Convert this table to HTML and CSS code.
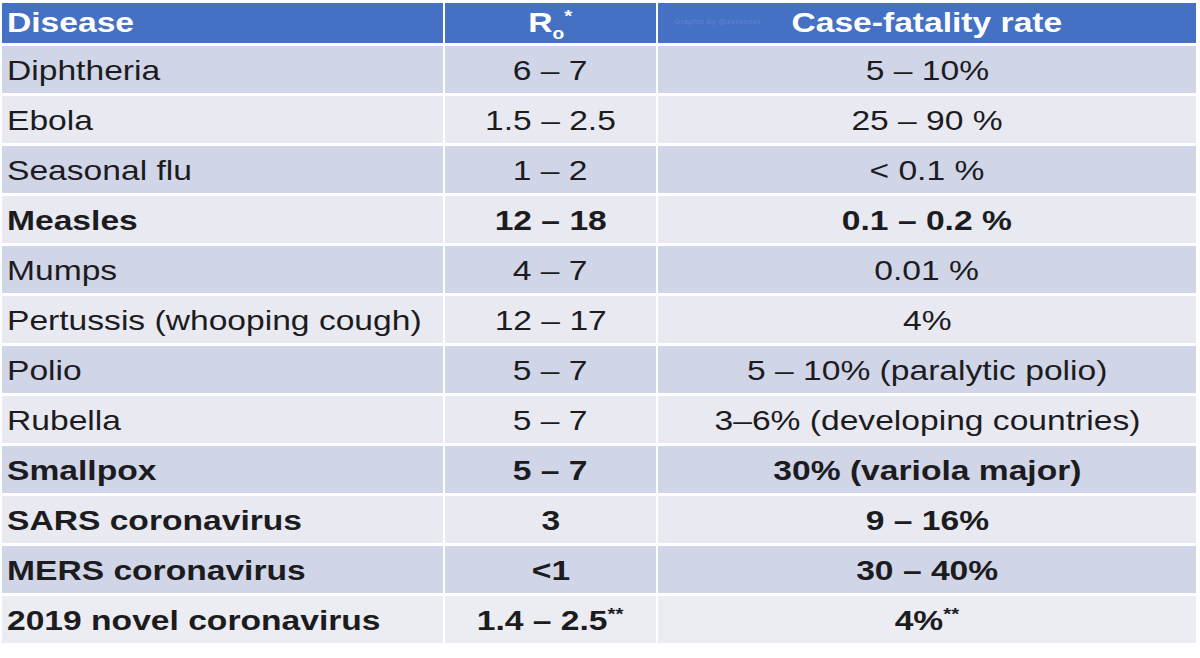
FILE: index.html
```html
<!DOCTYPE html>
<html>
<head>
<meta charset="utf-8">
<link rel="stylesheet" href="styles.css">
</head>
<body>
<div class="table">
  <div class="row head">
    <div class="cell c1"><span class="t">Disease</span></div>
    <div class="cell c2"><span class="t">R<sub>o</sub><sup>*</sup></span></div>
    <div class="cell c3"><span class="mark">Graphic by @xxxxxxxx</span><span class="t">Case-fatality rate</span></div>
  </div>
  <div class="row b1">
    <div class="cell c1"><span class="t">Diphtheria</span></div>
    <div class="cell c2"><span class="t">6 – 7</span></div>
    <div class="cell c3"><span class="t">5 – 10%</span></div>
  </div>
  <div class="row b2">
    <div class="cell c1"><span class="t">Ebola</span></div>
    <div class="cell c2"><span class="t">1.5 – 2.5</span></div>
    <div class="cell c3"><span class="t">25 – 90 %</span></div>
  </div>
  <div class="row b1">
    <div class="cell c1"><span class="t">Seasonal flu</span></div>
    <div class="cell c2"><span class="t">1 – 2</span></div>
    <div class="cell c3"><span class="t">&lt; 0.1 %</span></div>
  </div>
  <div class="row b2 bold">
    <div class="cell c1"><span class="t">Measles</span></div>
    <div class="cell c2"><span class="t">12 – 18</span></div>
    <div class="cell c3"><span class="t">0.1 – 0.2 %</span></div>
  </div>
  <div class="row b1">
    <div class="cell c1"><span class="t">Mumps</span></div>
    <div class="cell c2"><span class="t">4 – 7</span></div>
    <div class="cell c3"><span class="t">0.01 %</span></div>
  </div>
  <div class="row b2">
    <div class="cell c1"><span class="t">Pertussis (whooping cough)</span></div>
    <div class="cell c2"><span class="t">12 – 17</span></div>
    <div class="cell c3"><span class="t">4%</span></div>
  </div>
  <div class="row b1">
    <div class="cell c1"><span class="t">Polio</span></div>
    <div class="cell c2"><span class="t">5 – 7</span></div>
    <div class="cell c3"><span class="t">5 – 10% (paralytic polio)</span></div>
  </div>
  <div class="row b2">
    <div class="cell c1"><span class="t">Rubella</span></div>
    <div class="cell c2"><span class="t">5 – 7</span></div>
    <div class="cell c3"><span class="t">3–6% (developing countries)</span></div>
  </div>
  <div class="row b1 bold">
    <div class="cell c1"><span class="t">Smallpox</span></div>
    <div class="cell c2"><span class="t">5 – 7</span></div>
    <div class="cell c3"><span class="t">30% (variola major)</span></div>
  </div>
  <div class="row b2 bold">
    <div class="cell c1"><span class="t">SARS coronavirus</span></div>
    <div class="cell c2"><span class="t">3</span></div>
    <div class="cell c3"><span class="t">9 – 16%</span></div>
  </div>
  <div class="row b1 bold">
    <div class="cell c1"><span class="t">MERS coronavirus</span></div>
    <div class="cell c2"><span class="t">&lt;1</span></div>
    <div class="cell c3"><span class="t">30 – 40%</span></div>
  </div>
  <div class="row b2 bold last">
    <div class="cell c1"><span class="t">2019 novel coronavirus</span></div>
    <div class="cell c2"><span class="t">1.4 – 2.5<sup>**</sup></span></div>
    <div class="cell c3"><span class="t">4%<sup>**</sup></span></div>
  </div>
</div>
</body>
</html>
```
FILE: styles.css
```css
html, body {
  margin: 0;
  padding: 0;
  background: #ffffff;
}
body {
  width: 1200px;
  height: 658px;
  overflow: hidden;
  font-family: "Liberation Sans", Arial, sans-serif;
  color: #1c1c1e;
}
.table {
  display: flex;
  flex-direction: column;
  gap: 3px;
  padding: 3px 5px 0 2px;
}
.row {
  display: grid;
  grid-template-columns: 441px 211px 538px;
  column-gap: 2px;
  height: 47px;
}
.row.head {
  height: 40px;
}
.cell {
  display: flex;
  align-items: center;
  justify-content: center;
  position: relative;
  font-size: 28px;
  line-height: 32px;
  padding-top: 2px;
}
.cell.c1 {
  justify-content: flex-start;
  padding-left: 5px;
}
.head .cell {
  background: #4571c4;
  color: #ffffff;
  font-weight: bold;
  padding-top: 0;
}
.b1 .cell {
  background: #d1d5e8;
}
.b2 .cell {
  background: #e9e9f2;
}
.last .cell {
  background: #ececf3;
}
.bold .cell {
  font-weight: bold;
}
.t {
  display: inline-block;
  transform: scaleX(1.2);
  transform-origin: center;
  white-space: nowrap;
}
.c1 .t {
  transform-origin: left center;
}
sub {
  font-size: 16px;
  vertical-align: -7px;
  line-height: 0;
}
sup {
  font-size: 17px;
  vertical-align: 10px;
  line-height: 0;
}
.mark {
  position: absolute;
  left: 16px;
  top: 14px;
  font-size: 8px;
  line-height: 10px;
  font-weight: normal;
  color: #6283cf;
  letter-spacing: 0.3px;
}
```
